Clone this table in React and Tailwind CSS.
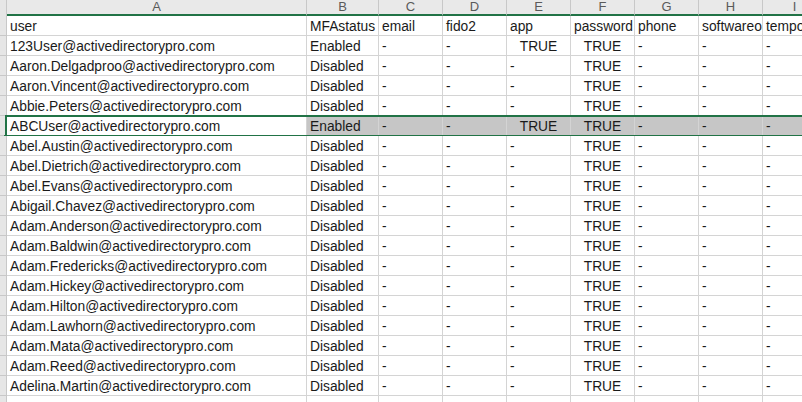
const cols = [
  { key: "A", w: "w-[300px]" },
  { key: "B", w: "w-[72px]" },
  { key: "C", w: "w-[64px]" },
  { key: "D", w: "w-[64px]" },
  { key: "E", w: "w-[64px]" },
  { key: "F", w: "w-[64px]" },
  { key: "G", w: "w-[64px]" },
  { key: "H", w: "w-[64px]" },
  { key: "I", w: "w-[64px]" },
];

const users = [
  ["123User", "Enabled", true],
  ["Aaron.Delgadproo", "Disabled"],
  ["Aaron.Vincent", "Disabled"],
  ["Abbie.Peters", "Disabled"],
  ["ABCUser", "Enabled", true],
  ["Abel.Austin", "Disabled"],
  ["Abel.Dietrich", "Disabled"],
  ["Abel.Evans", "Disabled"],
  ["Abigail.Chavez", "Disabled"],
  ["Adam.Anderson", "Disabled"],
  ["Adam.Baldwin", "Disabled"],
  ["Adam.Fredericks", "Disabled"],
  ["Adam.Hickey", "Disabled"],
  ["Adam.Hilton", "Disabled"],
  ["Adam.Lawhorn", "Disabled"],
  ["Adam.Mata", "Disabled"],
  ["Adam.Reed", "Disabled"],
  ["Adelina.Martin", "Disabled"],
];

const header = ["user", "MFAstatus", "email", "fido2", "app", "password", "phone", "softwareoath", "temporaryAccessPass"];

const Cell = ({ w, children, center, shade }) => (
  <div
    className={`${w} shrink-0 h-full border-r border-b border-[#d4d4d4] px-[3px] flex items-end leading-[16px] overflow-hidden whitespace-nowrap ${
      center ? "justify-center" : ""
    } ${shade ? "bg-[#c6c6c6] border-[#b8b8b8]" : "bg-white"}`}
  >
    {children}
  </div>
);

const Row = ({ cells, selected }) => (
  <div className="relative flex h-[20px]">
    <div className="w-[7px] shrink-0 h-full bg-[#e6e6e6] border-r border-b border-[#c8c8c8]" />
    {cells.map((c, i) => (
      <Cell key={i} w={cols[i].w} center={c === "TRUE"} shade={selected && i > 0}>
        {c}
      </Cell>
    ))}
    {selected && (
      <>
        <div className="absolute left-[5px] right-0 top-[-1px] bottom-[-1px] border-2 border-r-0 border-[#217346] pointer-events-none" />
        <div className="absolute left-[4px] bottom-[-3px] w-[4px] h-[4px] bg-[#217346]" />
      </>
    )}
  </div>
);

const App = () => {
  return (
    <div className="w-[802px] h-[402px] overflow-hidden bg-white text-[13.8px] text-[#1a1a1a] font-['Liberation_Sans',Arial,sans-serif]">
      <div className="flex h-[16px] bg-[#e9e9e9] text-[13px] text-[#5a5a5a]">
        <div className="w-[7px] shrink-0 h-full border-r border-[#c8c8c8] bg-[#e6e6e6]" />
        {cols.map((c) => (
          <div
            key={c.key}
            className={`${c.w} shrink-0 h-full border-r border-b-2 border-r-[#c8c8c8] border-b-[#217346] flex items-center justify-center`}
          >
            {c.key}
          </div>
        ))}
      </div>
      <Row cells={header} />
      {users.map(([name, status, app], idx) => (
        <Row
          key={name}
          selected={idx === 4}
          cells={[
            `${name}@activedirectorypro.com`,
            status,
            "-",
            "-",
            app ? "TRUE" : "-",
            "TRUE",
            "-",
            "-",
            "-",
          ]}
        />
      ))}
      <Row cells={["", "", "", "", "", "", "", "", ""]} />
    </div>
  );
};

export default App;
